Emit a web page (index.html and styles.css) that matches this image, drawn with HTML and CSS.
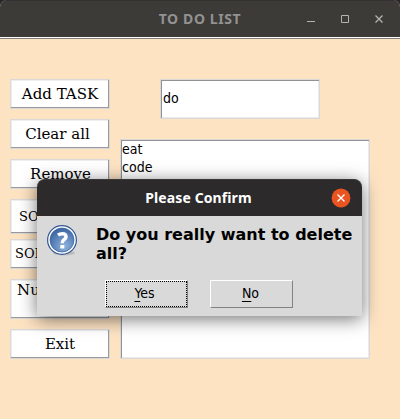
FILE: index.html
```html
<!DOCTYPE html>
<html lang="en">
<head>
<meta charset="utf-8">
<title>TO DO LIST</title>
<link rel="stylesheet" href="styles.css">
</head>
<body>
<div class="window">
  <header class="titlebar">
    <h1>TO DO LIST</h1>
    <svg class="controls" width="80" height="12" viewBox="0 0 80 12">
      <path d="M1 8.500h8" stroke="#b5b3af"/>
      <path d="M35.500 2.500h7v7h-7z" fill="none" stroke="#b5b3af"/>
      <path d="M69.500 2.500l7 7M76.500 2.500l-7 7" stroke="#b5b3af" stroke-width="1.300"/>
    </svg>
  </header>
  <main class="content">
    <nav class="actions">
      <button>Add TASK</button>
      <button class="clear">Clear all</button>
      <button class="remove">Remove</button>
      <button class="sort-asc">SORT(ASC)</button>
      <button class="sort-desc">SORT(DESC)</button>
      <button class="number">Number of</button>
      <button>Exit</button>
    </nav>
    <section class="tasks">
      <div class="entry sunken">do</div>
      <ul class="list sunken"><li>eat</li><li>code</li></ul>
    </section>
  </main>
</div>
<div class="dialog">
  <header class="dialog-title">
    <h2>Please Confirm</h2>
    <svg class="close" width="20" height="20" viewBox="0 0 20 20">
      <circle cx="10" cy="10" r="9.400" fill="#e95420"/>
      <path d="M6.500 6.500l7 7M13.500 6.500l-7 7" stroke="#fff" stroke-width="1.400"/>
    </svg>
  </header>
  <div class="message">
    <svg class="question" width="32" height="32" viewBox="0 0 32 32">
      <defs><radialGradient id="blue" cx=".6" cy=".75" r=".7"><stop offset="0" stop-color="#8fb3dd"/><stop offset="1" stop-color="#4069a6"/></radialGradient></defs>
      <ellipse cx="17" cy="28" rx="11" ry="2.500" fill="#aaa" opacity=".6"/>
      <circle cx="15" cy="15" r="14.400" fill="#fff" stroke="#2f5796" stroke-width="1.200"/>
      <circle cx="15" cy="15" r="12" fill="url(#blue)" stroke="#3d65a0" stroke-width=".8"/>
      <path d="M11 10Q13 8.700 15.300 8.700Q19 8.700 19 11.700Q19 13.500 17 14.800Q15.200 16 15.200 18.200" fill="none" stroke="#fff" stroke-width="3.500"/>
      <path d="M13.300 20h4v3.500h-4z" fill="#fff"/>
    </svg>
    <p>Do you really want to delete all?</p>
  </div>
  <div class="choices">
    <button class="yes"><u>Y</u>es</button>
    <button><u>N</u>o</button>
  </div>
</div>
</body>
</html>
```
FILE: styles.css
```css
* { box-sizing: border-box; }
body {
  margin: 0;
  width: 400px;
  height: 419px;
  overflow: hidden;
  position: relative;
  background: #27242c;
  color: #000;
  font-family: "DejaVu Sans Condensed", "DejaVu Sans", sans-serif;
  font-stretch: condensed;
}
h1, h2, p, ul { margin: 0; padding: 0; }
button { color: inherit; padding: 0; white-space: nowrap; overflow: hidden; }
.window { height: 419px; background: #fee3c3; border-radius: 7px 7px 0 0; overflow: hidden; }
.titlebar {
  height: 37px;
  display: grid;
  grid-template-columns: 1fr 80px;
  align-items: center;
  padding-right: 14px;
  background: #3c3b37;
  border-top: 1px solid #333230;
  color: #929292;
}
h1, h2 { font: bold 14px/18px "Noto Sans", sans-serif; text-align: center; white-space: nowrap; }
h1 { padding-left: 94px; letter-spacing: .6px; }
.content {
  display: flex;
  gap: 10px;
  padding: 40px 10px 0;
  border-top: 1px solid #fff;
  box-shadow: inset 0 1px #7f7f7f;
}
.actions { width: 100px; display: flex; flex-direction: column; gap: 10px; padding-top: 1px; }
.actions button {
  height: 30px;
  border: 1px solid #d9d9d9;
  background: #fff;
  box-shadow: inset -1px -1px #999, inset 1px 1px #eee;
  font: 15px/18px "DejaVu Serif", serif;
  font-stretch: normal;
}
.actions .clear { padding-right: 5px; }
.actions .remove { padding-left: 1px; }
.actions .sort-asc, .actions .sort-desc { font-size: 13px; text-align: left; padding-left: 8px; }
.actions .sort-asc { height: 35px; margin-bottom: -5px; }
.actions .sort-desc { padding-left: 4px; }
.actions .number { height: 40px; text-align: left; padding: 0 0 18px 6px; }
.tasks { width: 250px; display: flex; flex-direction: column; gap: 20px; padding-top: 1px; }
.sunken {
  border: 1px solid #d9d9d9;
  background: #fff;
  box-shadow: inset 1px 1px #929292, inset -1px -1px #ebebeb;
  font-size: 14px;
}
.entry { width: 160px; height: 40px; margin-left: 40px; padding-left: 2px; line-height: 36px; }
.list { height: 220px; list-style: none; padding: 0 1px; line-height: 18px; }
.dialog {
  position: absolute;
  left: 37px;
  top: 179px;
  width: 325px;
  height: 137px;
  background: #d9d9d9;
  border-radius: 8px 8px 0 0;
  box-shadow: 0 3px 18px rgba(0,0,0,.55);
}
.dialog-title {
  height: 37px;
  display: grid;
  grid-template-columns: 1fr 20px;
  align-items: center;
  padding-right: 11px;
  border-radius: 8px 8px 0 0;
  background: #2c2a2b;
  border-top: 1px solid #393738;
  color: #fff;
}
.dialog-title h2 { padding-left: 29px; letter-spacing: .1px; }
.message { display: flex; gap: 17px; padding: 9px 0 0 10px; height: 64px; }
.message p { width: 262px; font: bold 16px/19px "DejaVu Sans", sans-serif; font-stretch: normal; }
.choices { display: flex; gap: 22px; padding-left: 68px; }
.choices button {
  width: 83px;
  height: 28px;
  padding: 0 4px 2px 0;
  border: 1px solid;
  border-color: #fff #828282 #828282 #fff;
  background: #d9d9d9;
  font: 14px/18px "DejaVu Sans Condensed", "DejaVu Sans", sans-serif;
  font-stretch: condensed;
}
.choices button { padding-right: 2px; }
.choices .yes { padding-right: 4px; outline: 1px dotted #000; outline-offset: -2px; }
u { text-underline-offset: 3px; text-decoration-thickness: 1px; }
```
